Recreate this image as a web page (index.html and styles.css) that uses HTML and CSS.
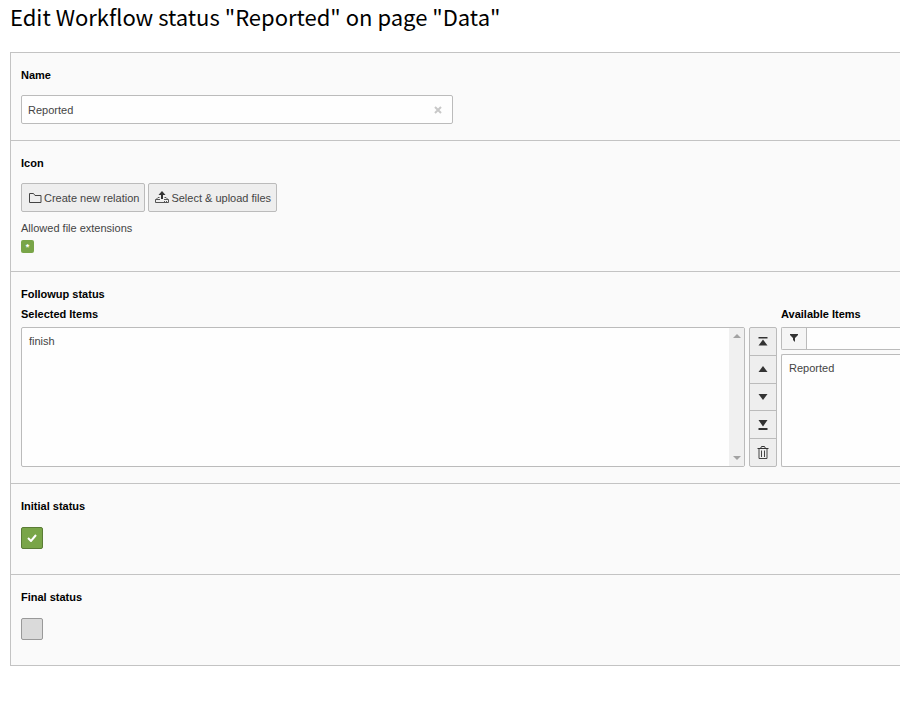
FILE: index.html
```html
<!DOCTYPE html>
<html lang="en">
<head>
<meta charset="utf-8">
<title>Edit Workflow status</title>
<link rel="stylesheet" href="styles.css">
</head>
<body>
<h1 class="title">Edit Workflow status "Reported" on page "Data"</h1>
<form class="panel">
  <section class="section">
    <label class="label" for="name">Name</label>
    <div class="text-field">
      <input class="text-input" id="name" type="text" value="Reported">
      <button class="clear" type="button" aria-label="Clear">
        <svg width="8" height="8" viewBox="0 0 8 8"><path d="M1 1l6 6M7 1l-6 6" stroke="#c8c8c8" stroke-width="2" fill="none"/></svg>
      </button>
    </div>
  </section>

  <section class="section">
    <h2 class="label">Icon</h2>
    <div class="buttons">
      <button class="button" type="button">
        <svg width="14" height="14" viewBox="0 0 14 14"><path d="M1.500 11.500v-9h4l1.500 2h6v7z" fill="none" stroke="#444"/></svg>
        Create new relation
      </button>
      <button class="button" type="button">
        <svg width="14" height="14" viewBox="0 0 14 14"><path d="M7 0l3.500 4H8v4H6V4H3.500z" fill="#333"/><path d="M4.500 6.500H3L1 8.500M9.500 6.500H11l2 2M5 8.500H.5v3h13v-3H9" fill="none" stroke="#555"/><path d="M9 10h1v1H9zM11 10h1v1h-1z" fill="#555"/></svg>
        Select &amp; upload files
      </button>
    </div>
    <div class="hint">Allowed file extensions</div>
    <span class="badge">*</span>
  </section>

  <section class="section">
    <h2 class="label label-group">Followup status</h2>
    <div class="picker">
      <div class="picker-column">
        <label class="label label-list" for="selected">Selected Items</label>
        <div class="list-box">
          <select class="list" id="selected" multiple><option>finish</option></select>
          <div class="scrollbar" aria-hidden="true">
            <svg width="8" height="4" viewBox="0 0 8 4"><path d="M0 4l4-4 4 4z" fill="#a3a3a3"/></svg>
            <svg width="8" height="4" viewBox="0 0 8 4"><path d="M0 0l4 4 4-4z" fill="#a3a3a3"/></svg>
          </div>
        </div>
      </div>
      <div class="moves">
        <button class="move" type="button" aria-label="Move to top"><svg width="14" height="14" viewBox="0 0 14 14"><path d="M2.500 3h9v1.500h-9zM2.500 11.500l4.500-6 4.500 6z" fill="#333"/></svg></button>
        <button class="move" type="button" aria-label="Move up"><svg width="14" height="14" viewBox="0 0 14 14"><path d="M2.500 10L7 4l4.500 6z" fill="#333"/></svg></button>
        <button class="move" type="button" aria-label="Move down"><svg width="14" height="14" viewBox="0 0 14 14"><path d="M2.500 4L7 10l4.500-6z" fill="#333"/></svg></button>
        <button class="move" type="button" aria-label="Move to bottom"><svg width="14" height="14" viewBox="0 0 14 14"><path d="M2.500 2L7 8.500 11.500 2zM2.500 10h9v2h-9z" fill="#333"/></svg></button>
        <button class="move" type="button" aria-label="Remove"><svg width="14" height="14" viewBox="0 0 14 14"><path d="M1.500 2.500h11M4.500 2.500l1-2h3l1 2" fill="none" stroke="#333"/><path d="M3 3v9.500h8V3M5.500 4.500v6.500M8.500 4.500v6.500" fill="none" stroke="#444"/></svg></button>
      </div>
      <div class="picker-column">
        <label class="label label-list" for="available">Available Items</label>
        <div class="filter">
          <span class="filter-icon"><svg width="8" height="8" viewBox="0 0 8 8"><path d="M0 0h8v1L5 4v4L3 6V4L0 1z" fill="#333"/></svg></span>
          <input class="filter-input" type="text" aria-label="Filter">
        </div>
        <div class="list-box list-box-open">
          <select class="list" id="available" multiple><option>Reported</option></select>
        </div>
      </div>
    </div>
  </section>

  <section class="section section-check">
    <label class="label" for="initial">Initial status</label>
    <input class="check" id="initial" type="checkbox" checked>
  </section>

  <section class="section section-check">
    <label class="label" for="final">Final status</label>
    <input class="check" id="final" type="checkbox">
  </section>
</form>
</body>
</html>
```
FILE: styles.css
```css
* { box-sizing: border-box; }

body {
  margin: 0 0 0 10px;
  background: #fff;
  color: #444;
  font: 11px/16px "Liberation Sans", Arial, sans-serif;
}

svg { display: block; flex: none; }

button, input, select { margin: 0; font: inherit; color: inherit; }

.title {
  margin: 0 0 20px;
  color: #000;
  font: 400 22px/32px "Noto Sans CJK JP", sans-serif;
}

.panel {
  border: 1px solid #c3c3c3;
  border-width: 0 0 1px 1px;
  background: #fafafa;
}

.section {
  padding: 14px 0 16px 10px;
  border-top: 1px solid #c3c3c3;
}

.section-check { padding-bottom: 25px; }

.label {
  display: block;
  margin: 0 0 12px;
  color: #000;
  font-size: 11px;
  font-weight: 700;
  line-height: 16px;
}

.section-check .label { margin-bottom: 13px; }
.label-group { margin-bottom: 4px; }
.label-list { margin-bottom: 5px; }

.text-field {
  display: flex;
  align-items: center;
  max-width: 432px;
  height: 29px;
  padding: 0 10px 0 6px;
  border: 1px solid #bbb;
  border-radius: 2px;
  background: #fefefe;
}

.text-input {
  flex: 1;
  min-width: 0;
  padding: 0;
  border: 0;
  background: none;
}

.clear { padding: 0; border: 0; background: none; }

.buttons { display: flex; gap: 3px; }

.button {
  display: flex;
  align-items: center;
  gap: 2px;
  height: 29px;
  padding: 0 5px 0 6px;
  border: 1px solid #bbb;
  border-radius: 2px;
  background: #eee;
}

.hint { margin: 8px 0 4px; }

.badge {
  display: block;
  width: 13px;
  height: 13px;
  margin-bottom: 2px;
  border-radius: 2px;
  background: #79a548;
  color: #fff;
  font-size: 9px;
  font-weight: 700;
  line-height: 15px;
  text-align: center;
}

.picker {
  display: grid;
  grid-template-columns: minmax(0, 1fr) 28px 119px;
  gap: 4px;
}

.picker-column { display: flex; flex-direction: column; }

.list-box {
  display: flex;
  flex: 1;
  border: 1px solid #bbb;
  border-radius: 2px;
  background: #fefefe;
  overflow: hidden;
}

.list-box-open {
  border-right: 0;
  border-radius: 2px 0 0 2px;
}

.list {
  flex: 1;
  min-width: 0;
  height: 100%;
  padding: 7px 5px;
  border: 0;
  background: none;
  overflow: hidden;
}

.list option { padding: 0 2px; line-height: 16px; min-height: 16px; }

.scrollbar {
  display: flex;
  flex-direction: column;
  align-items: center;
  justify-content: space-between;
  width: 15px;
  padding: 6px 0;
  background: #f0f0f0;
}

.moves {
  display: flex;
  flex-direction: column;
  height: 140px;
  margin-top: 21px;
  border: 1px solid #bbb;
  border-radius: 2px;
  background: #eee;
}

.move {
  display: flex;
  flex: 1;
  align-items: center;
  justify-content: center;
  padding: 0;
  border: 0;
  background: none;
}

.move + .move { border-top: 1px solid #bbb; }

.filter {
  display: flex;
  height: 23px;
  margin-bottom: 4px;
  border: 1px solid #bbb;
  border-right: 0;
  border-radius: 2px 0 0 2px;
  background: #fefefe;
}

.filter-icon {
  display: flex;
  align-items: center;
  justify-content: center;
  width: 25px;
  padding-bottom: 2px;
  border-right: 1px solid #bbb;
  background: #f5f5f5;
}

.filter-input {
  flex: 1;
  min-width: 0;
  padding: 0 6px;
  border: 0;
  background: none;
}

.check {
  display: block;
  width: 22px;
  height: 22px;
  appearance: none;
  border: 1px solid #999;
  border-radius: 2px;
  background: #dadada;
}

.check:checked {
  border-color: #5a7c35;
  background: #79a548 url("data:image/svg+xml,%3Csvg xmlns='http://www.w3.org/2000/svg' width='10' height='8' viewBox='0 0 10 8'%3E%3Cpath d='M1 4l3 3 5-6' fill='none' stroke='white' stroke-width='2'/%3E%3C/svg%3E") center no-repeat;
}
```
